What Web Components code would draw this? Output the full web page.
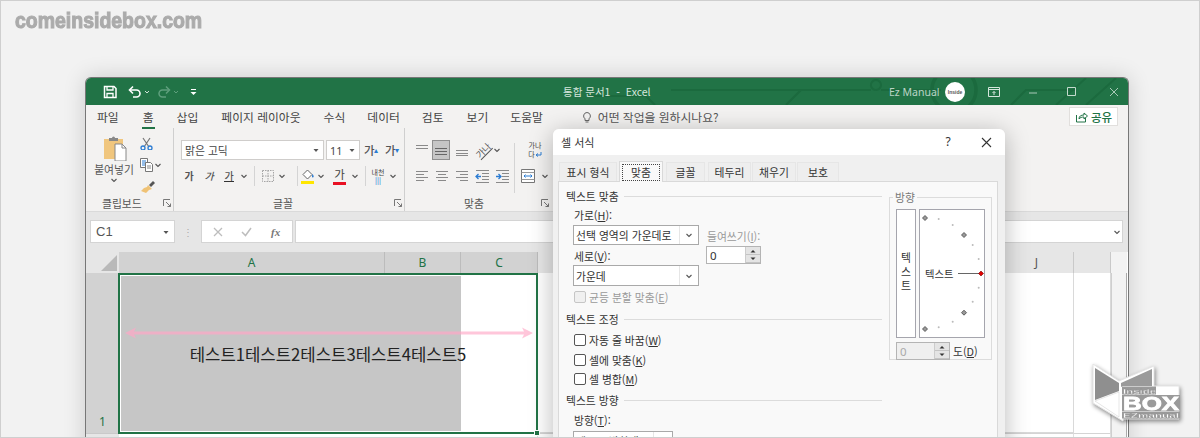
<!DOCTYPE html>
<html lang="ko">
<head>
<meta charset="utf-8">
<title>셀 서식</title>
<style>
  html, body { margin: 0; padding: 0; background: #f2f2f2; }
</style>
</head>
<body>
<x-page>
  <x-window>
    <x-titlebar></x-titlebar>
    <x-tabs></x-tabs>
    <x-ribbon></x-ribbon>
    <x-formula-bar></x-formula-bar>
    <x-sheet></x-sheet>
  </x-window>
  <x-format-dialog></x-format-dialog>
  <x-logo></x-logo>
</x-page>

<script>
const lines = (rows, color = '#8a8a8a') => rows.map(([x1, x2, y]) => `<path d="M${x1} ${y}H${x2}" stroke="${color}" fill="none"/>`).join('');

const ICONS = {
  save: '<path d="M1.5 1.5h9.5l2 2v9h-11.500z" fill="none" stroke="#fff" stroke-width="1.500"/><path d="M4 1.500v3.500h6v-3.500M4 12.500v-4h6v4" fill="none" stroke="#fff" stroke-width="1.300"/>',
  undo: '<path d="M2 5h6.500a3.300 3.300 0 0 1 0 7H5" fill="none" stroke="#fff" stroke-width="1.600"/><path d="M5 1.500 1.500 5 5 8.500" fill="none" stroke="#fff" stroke-width="1.600"/>',
  redo: '<path d="M12 5H5.500a3.300 3.300 0 0 0 0 7H9" fill="none" stroke="#5f9f7d" stroke-width="1.500"/><path d="M9 1.500 12.500 5 9 8.500" fill="none" stroke="#5f9f7d" stroke-width="1.500"/>',
  caretW: '<path d="M2 3 4 5 6 3" fill="none" stroke="#cfe3d8" stroke-width="1"/>',
  caretDim: '<path d="M2 3 4 5 6 3" fill="none" stroke="#5f9f7d" stroke-width="1"/>',
  custom: '<path d="M2 2.500h5" stroke="#fff"/><path d="M1.500 5h6L4.500 8z" fill="#fff"/>',
  caret: '<path d="M1.500 3 4 5.500 6.500 3" fill="none" stroke="#555" stroke-width="1.100"/>',
  tri: '<path d="M1.500 3h5L4 6z" fill="#555"/>',
  display: '<path d="M.5 1.500h11v9H.5z" fill="none" stroke="#d5e6dc"/><path d="M.5 3.500h11" stroke="#d5e6dc"/><path d="M6 9V5.500M4.500 7 6 5.500 7.500 7" fill="none" stroke="#d5e6dc"/>',
  min: '<path d="M1 6h8" stroke="#a9c9b7" stroke-width="1"/>',
  max: '<path d="M1.500 1.500h8v8h-8z" fill="none" stroke="#c4dacd"/>',
  close: '<path d="M1 1l8 8M9 1 1 9" stroke="#a9c9b7" fill="none"/>',
  bulb: '<path d="M6 1.500a3.500 3.500 0 0 0-2 6.300V9.500h4V7.800a3.500 3.500 0 0 0-2-6.300zM4.500 11h3" fill="none" stroke="#666"/>',
  share: '<path d="M1.500 5v7h9V8" fill="none" stroke="#217346"/><path d="M4 9c0-3 2-4 5-4V3l3.500 3L9 9V7C7 7 5 7.500 4 9z" fill="none" stroke="#217346"/>',
  paste: '<path d="M0 3h19v20H0z" fill="#f0c67e"/><path d="M5 2h3a1.500 1.500 0 0 1 3 0h3v3H5z" fill="#888"/><path d="M11 8h7l4 4v13H11z" fill="#fff" stroke="#888"/><path d="M18 8v4h4" fill="none" stroke="#888"/>',
  cut: '<path d="M3 1l6 9M10 1 4 10" stroke="#777" fill="none" stroke-width="1.200"/><circle cx="3" cy="11" r="2" fill="none" stroke="#2b7cd3" stroke-width="1.300"/><circle cx="10" cy="11" r="2" fill="none" stroke="#2b7cd3" stroke-width="1.300"/>',
  copy: '<path d="M.5.500h7v9h-7z" fill="#fff" stroke="#777"/><path d="M2 3h4M2 5h4M2 7h4" stroke="#2b7cd3"/><path d="M5.500 4.500h5l2 2v7h-7z" fill="#fff" stroke="#777"/><path d="M7 8h4M7 10h4" stroke="#888"/>',
  brush: '<path d="M9 6l4 4-3 1-3 3-5-2 3-3 3-1z" fill="#efc275" transform="translate(-1 -1)"/><path d="M9 5l4-4 2 2-4 4z" fill="#555"/>',
  borders: '<path d="M.5.500h11v11H.500zM6 .5v11M.5 6h11" fill="none" stroke="#a5a5a5" stroke-dasharray="1.500 1"/>',
  fill: '<path d="M6.500 1 11 5.500 6.500 10 2 5.500z" fill="#fff" stroke="#666"/><path d="M11.500 5c1.500 2 1.500 3 .500 3.500s-1.500-1-.5-3.500z" fill="#2b7cd3"/><path d="M0 12h13v3H0z" fill="#ffe600"/>',
  top: lines([[1, 13, 2.500], [1, 13, 5.500]]),
  mid: lines([[1, 13, 5.500], [1, 13, 8.500]], '#666') + '<path d="M1 11.500h12" stroke="#666"/>',
  bot: lines([[1, 13, 7.500], [1, 13, 10.500], [1, 13, 12.500]]),
  left: lines([[1, 13, 2.500], [1, 9, 5.500], [1, 13, 8.500], [1, 9, 11.500]]),
  center: lines([[1, 13, 2.500], [3, 11, 5.500], [1, 13, 8.500], [3, 11, 11.500]]),
  right: lines([[1, 13, 2.500], [5, 13, 5.500], [1, 13, 8.500], [5, 13, 11.500]]),
  dec: lines([[7, 14, 4.500], [7, 14, 7.500], [7, 14, 10.500], [1, 14, 1.500], [1, 14, 13.500]]) + '<path d="M6 7.500H1M3.500 5 1 7.500 3.500 10" fill="none" stroke="#2b7cd3" stroke-width="1.300"/>',
  inc: lines([[7, 14, 4.500], [7, 14, 7.500], [7, 14, 10.500], [1, 14, 1.500], [1, 14, 13.500]]) + '<path d="M1 7.500h5M3.500 5 6 7.500 3.500 10" fill="none" stroke="#2b7cd3" stroke-width="1.300"/>',
  merge: '<path d="M.5.500h13v13H.500z" fill="#fff" stroke="#777"/><path d="M.5 3.500h13M.5 10.500h13" stroke="#999"/><path d="M3 7h8M4.500 5.500 3 7l1.500 1.500M9.500 5.500 11 7 9.500 8.500" fill="none" stroke="#2b7cd3"/>',
  fxX: '<path d="M1 1l8 8M9 1 1 9" stroke="#bdbdbd" stroke-width="1.300" fill="none"/>',
  fxV: '<path d="M1 6l3.500 3.500L10 2" stroke="#bdbdbd" stroke-width="1.500" fill="none"/>',
  up: '<path d="M1.500 4.500 4 2l2.500 2.500z" fill="#333"/>',
  down: '<path d="M1.500 1.500 4 4l2.500-2.500z" fill="#333"/>',
  launch: '<path d="M.5 7V.5H7" fill="none" stroke="#777"/><path d="M3 3l4.500 4.500M4.500 7.500h3v-3" fill="none" stroke="#777"/>'
};

class XIcon extends HTMLElement {
  connectedCallback() {
    const w = +this.getAttribute('w') || 14;
    const h = +this.getAttribute('h') || w;
    const vb = this.getAttribute('vb') || `0 0 ${w} ${h}`;
    const name = this.getAttribute('name');
    this.attachShadow({ mode: 'open' }).innerHTML = `
      <style>:host { display: block; flex: none; width: ${w}px; height: ${h}px; } svg { display: block; }</style>
      <svg width="${w}" height="${h}" viewBox="${vb}">${ICONS[name] || ''}</svg>`;
  }
}
customElements.define('x-icon', XIcon);

const simple = (tag, html) => customElements.define(tag, class extends HTMLElement {
  connectedCallback() {
    this.attachShadow({ mode: 'open' }).innerHTML = html;
  }
});

simple('x-page', `
  <style>
    :host {
      display: block; position: relative; box-sizing: border-box;
      width: 1200px; height: 438px; overflow: hidden;
      border: 1px solid #cfcfcf; background: #f2f2f2;
      font-family: "Noto Sans CJK KR", "Noto Sans", sans-serif; color: #333;
    }
    .mark {
      margin: 6px 0 0 14px; height: 70px; white-space: nowrap;
      font: bold 22px/28px "Liberation Sans", sans-serif; color: #ababab;
      -webkit-text-stroke: 1.100px #ababab; transform: scaleX(.885); transform-origin: left top;
    }
  </style>
  <div class="mark">comeinsidebox.com</div>
  <slot></slot>`);

simple('x-window', `
  <style>
    :host {
      display: flex; flex-direction: column; box-sizing: border-box;
      width: 1044px; height: 400px; margin-left: 84px;
      border: 1px solid #777; border-bottom: 0; border-radius: 6px 6px 0 0;
      background: #fff; box-shadow: 0 0 22px rgba(0,0,0,.16); overflow: hidden;
    }
  </style>
  <slot></slot>`);

simple('x-titlebar', `
  <style>
    :host { display: flex; align-items: center; position: relative; flex: none; height: 27px; background: #217346; color: #d5e6dc; font-size: 10.500px; }
    .deco { position: absolute; left: 0; top: 0; }
    .row { display: flex; align-items: center; position: relative; width: 100%; }
    .title { margin-left: 365px; width: 326px; }
    .user { width: 56px; white-space: nowrap; font-family: "Noto Sans", sans-serif; font-size: 10.500px; color: #b9d3c5; }
    .avatar { width: 20px; height: 20px; border-radius: 50%; background: #fff; color: #555; font: bold 5px/20px "Liberation Sans", sans-serif; text-align: center; white-space: nowrap; overflow: hidden; }
  </style>
  <svg class="deco" width="1042" height="27" fill="none" stroke="#1b6a3e" stroke-width="2">
    <path d="M500 18h60l9 9M585 12h200M700 27l15-15M790 12a5 5 0 1 0-.1 0M795 12h60"/>
    <circle cx="868" cy="12" r="22" stroke-width="3.500"/>
    <path d="M925 27l15-15h50M970 27 1000 0M1000 27 1030 0"/>
  </svg>
  <div class="row">
    <x-icon name="save" style="margin-left:17px"></x-icon>
    <x-icon name="undo" style="margin-left:11px"></x-icon>
    <x-icon name="caretW" w="8" style="margin-left:1px"></x-icon>
    <x-icon name="redo" style="margin-left:6px"></x-icon>
    <x-icon name="caretDim" w="8" style="margin-left:1px"></x-icon>
    <x-icon name="custom" w="9" style="margin-left:9px"></x-icon>
    <span class="title">통합 문서1&nbsp; -&nbsp; Excel</span>
    <span class="user">Ez Manual</span>
    <div class="avatar">Inside</div>
    <x-icon name="display" w="12" style="margin-left:23px"></x-icon>
    <x-icon name="min" w="10" style="margin-left:28px"></x-icon>
    <x-icon name="max" w="11" style="margin-left:28px"></x-icon>
    <x-icon name="close" w="10" style="margin-left:32px"></x-icon>
  </div>`);

simple('x-tabs', `
  <style>
    :host { display: flex; align-items: center; flex: none; height: 23px; background: #f3f2f1; font-size: 11.800px; color: #444; position: relative; }
    span { position: relative; white-space: nowrap; }
    .on::after { content: ""; position: absolute; left: -1px; right: -1px; bottom: -4px; height: 2px; background: #217346; }
    .share { margin-left: auto; margin-right: 10px; width: 49px; height: 19px; box-sizing: border-box; background: #fff; border: 1px solid #e1dfdd; display: flex; align-items: center; justify-content: center; gap: 3px; color: #217346; font-weight: 500; font-size: 11.500px; }
  </style>
  <span style="margin-left:11px">파일</span>
  <span class="on" style="margin-left:24px">홈</span>
  <span style="margin-left:23px">삽입</span>
  <span style="margin-left:23px">페이지 레이아웃</span>
  <span style="margin-left:23px">수식</span>
  <span style="margin-left:22px">데이터</span>
  <span style="margin-left:22px">검토</span>
  <span style="margin-left:23px">보기</span>
  <span style="margin-left:22px">도움말</span>
  <x-icon name="bulb" w="12" style="margin-left:38px"></x-icon>
  <span style="margin-left:5px;color:#555">어떤 작업을 원하시나요?</span>
  <div class="share"><x-icon name="share" w="13"></x-icon><span>공유</span></div>`);

simple('x-ribbon-group', `
  <style>
    :host { display: flex; flex-direction: column; flex: none; box-sizing: border-box; height: 84px; border-right: 1px solid #cfcfcf; margin: 0; }
    .body { flex: 1; padding-top: 7px; display: block; }
    .foot { display: flex; align-items: center; height: 14px; margin-bottom: 2px; font-size: 10.800px; color: #555; padding-right: 2px; }
    .foot span { margin-left: var(--lx, 0); }
    .foot x-icon { margin-left: auto; }
  </style>
  <div class="body"><slot></slot></div>
  <div class="foot"><span><slot name="label"></slot></span><x-icon name="launch" w="8"></x-icon></div>`);

simple('x-ribbon', `
  <style>
    :host { display: flex; flex: none; height: 84px; box-sizing: border-box; background: #f3f2f1; border-bottom: 1px solid #dadada; overflow: hidden; }
    .clip { display: grid; grid-template-columns: 40px 34px; padding-left: 8px; height: 60px; }
    .paste { text-align: center; font-size: 10.800px; color: #555; line-height: 14px; white-space: nowrap; }
    .paste x-icon { margin: 1px 0 1px 10px; }
    .paste x-icon.cr { margin: 0 auto; }
    .small { display: flex; flex-direction: column; gap: 8px; padding: 2px 0 0 6px; }
    .small div { display: flex; align-items: center; gap: 1px; }
    .row { display: flex; align-items: center; }
    .combo { box-sizing: border-box; height: 20px; background: #fff; border: 1px solid #cfcdcb; display: flex; align-items: center; padding: 0 3px 0 3px; font-size: 10.800px; color: #444; justify-content: space-between; white-space: nowrap; }
    .sep { width: 1px; height: 20px; background: #d4d4d4; flex: none; }
    .sel { box-sizing: border-box; width: 18px; height: 20px; background: #c6c6c6; border: 1px solid #8f8f8f; display: flex; align-items: center; justify-content: center; }
    .ga { display: flex; position: relative; width: 14px; font-size: 11.500px; font-weight: 500; color: #555; line-height: 14px; }
    .slot { display: flex; align-items: center; justify-content: center; flex: none; height: 20px; }
    .u { border-bottom: 1px solid #333; line-height: 11px; }
    .col { position: relative; width: 13px; height: 17px; font-size: 11.500px; line-height: 13px; text-align: center; color: #444; border-bottom: 3px solid #e81123; box-sizing: border-box; }
    .cw { width: 14px; font-size: 7px; line-height: 8px; text-align: center; color: #444; }
    .cw b { color: #2b7cd3; font-weight: 500; display: block; }
    .align { display: flex; }
    .alignL { width: 101px; padding-left: 8px; display: flex; flex-direction: column; gap: 6px; }
    .alignR { padding-left: 6px; display: flex; flex-direction: column; gap: 6px; }
    .vsep { width: 1px; height: 50px; background: #d4d4d4; margin-top: 3px; }
    .up { margin: 0 0 0 -1px; color: #2b7cd3; font-size: 8px; }
    .orient { font-size: 9px; transform: rotate(-45deg); color: #555; text-decoration: underline; white-space: nowrap; }
    .wrapt { font-size: 7px; line-height: 9px; color: #444; width: 16px; text-align: center; }
    .wrapt svg { vertical-align: -1px; }
  </style>
  <x-ribbon-group style="width:88px;--lx:16px">
    <div class="clip">
      <div class="paste">
        <x-icon name="paste" w="23" h="25"></x-icon>
        <div>붙여넣기</div>
        <x-icon class="cr" name="caret" w="8"></x-icon>
      </div>
      <div class="small">
        <x-icon name="cut" w="13"></x-icon>
        <div><x-icon name="copy" w="13" h="14"></x-icon><x-icon name="caret" w="8"></x-icon></div>
        <x-icon name="brush" w="15"></x-icon>
      </div>
    </div>
    <span slot="label">클립보드</span>
  </x-ribbon-group>

  <x-ribbon-group style="width:231px;--lx:99px">
    <div class="row" style="padding-left:7px;margin-top:5px">
      <div class="combo" style="width:143px"><span>맑은 고딕</span><x-icon name="tri" w="8"></x-icon></div>
      <div class="combo" style="width:34px;margin-left:2px;font-family:'Noto Sans',sans-serif"><span>11</span><x-icon name="tri" w="8"></x-icon></div>
      <div class="slot" style="width:14px;margin-left:4px"><span class="ga">가<span class="up">▴</span></span></div>
      <div class="slot" style="width:14px;margin-left:7px"><span class="ga">가<span class="up">▾</span></span></div>
    </div>
    <div class="row" style="padding-left:5px;margin-top:6px">
      <div class="slot" style="width:20px"><b class="ga" style="font-size:10px;font-weight:700;width:auto">가</b></div>
      <div class="slot" style="width:20px"><i class="ga" style="font-size:10px;width:auto">가</i></div>
      <div class="slot" style="width:20px"><span class="ga u" style="font-size:10px;width:auto">가</span></div>
      <x-icon name="caret" w="8" style="margin-left:1px"></x-icon>
      <div class="sep" style="margin-left:6px"></div>
      <x-icon name="borders" w="12" style="margin-left:7px"></x-icon>
      <x-icon name="caret" w="8" style="margin-left:4px"></x-icon>
      <div class="sep" style="margin-left:11px"></div>
      <x-icon name="fill" w="13" h="15" style="margin-left:3px"></x-icon>
      <x-icon name="caret" w="8" style="margin-left:3px"></x-icon>
      <div class="col" style="margin-left:8px">가</div>
      <x-icon name="caret" w="8" style="margin-left:5px"></x-icon>
      <div class="sep" style="margin-left:6px"></div>
      <div class="cw" style="margin-left:5px">내천<b>|||</b></div>
      <x-icon name="caret" w="8" style="margin-left:4px"></x-icon>
    </div>
    <span slot="label">글꼴</span>
  </x-ribbon-group>

  <x-ribbon-group style="width:146px;--lx:59px;border-right:0">
    <div class="align" style="margin-top:5px">
      <div class="alignL">
        <div class="row">
          <div class="slot" style="width:14px;margin-left:2px"><x-icon name="top"></x-icon></div>
          <div class="sel" style="margin-left:3px"><x-icon name="mid"></x-icon></div>
          <div class="slot" style="width:14px;margin-left:5px"><x-icon name="bot"></x-icon></div>
          <div class="slot" style="width:16px;margin-left:6px"><span class="orient">가나</span></div>
          <x-icon name="caret" w="8" style="margin-left:2px"></x-icon>
        </div>
        <div class="row">
          <div class="slot" style="width:14px;margin-left:2px"><x-icon name="left"></x-icon></div>
          <div class="slot" style="width:14px;margin-left:6px"><x-icon name="center"></x-icon></div>
          <div class="slot" style="width:14px;margin-left:6px"><x-icon name="right"></x-icon></div>
          <div class="slot" style="width:15px;margin-left:6px"><x-icon name="dec" w="15"></x-icon></div>
          <div class="slot" style="width:15px;margin-left:5px"><x-icon name="inc" w="15"></x-icon></div>
        </div>
      </div>
      <div class="vsep" style="margin-left:0"></div>
      <div class="alignR">
        <div class="slot"><div class="wrapt">가나<br>다<svg width="7" height="7"><path d="M6 1v3H1.500M3 2.500 1 4l2 1.500" fill="none" stroke="#2b7cd3"/></svg></div></div>
        <div class="row" style="height:20px"><x-icon name="merge"></x-icon><x-icon name="caret" w="8" style="margin-left:6px"></x-icon></div>
      </div>
    </div>
    <span slot="label">맞춤</span>
  </x-ribbon-group>`);

simple('x-formula-bar', `
  <style>
    :host { display: flex; flex: none; box-sizing: border-box; height: 40px; padding: 8px 5px 9px 4px; background: #e6e6e6; align-items: stretch; }
    .box { background: #fff; border: 1px solid #d4d4d4; box-sizing: border-box; display: flex; align-items: center; }
    .name { width: 85px; padding: 0 4px 0 5px; justify-content: space-between; font: 13px "Liberation Sans", sans-serif; color: #555; }
    .dots { width: 26px; display: flex; align-items: center; justify-content: center; color: #aaa; font-size: 10px; letter-spacing: 0; }
    .btns { width: 92px; }
    .fx { font: italic bold 11px "Liberation Serif", serif; color: #777; margin-left: 19px; }
    .input { flex: 1; margin-left: 2px; justify-content: flex-end; padding-right: 1px; }
  </style>
  <div class="box name"><span>C1</span><x-icon name="tri" w="8"></x-icon></div>
  <div class="dots">⋮</div>
  <div class="box btns">
    <x-icon name="fxX" w="10" style="margin-left:11px"></x-icon>
    <x-icon name="fxV" w="11" style="margin-left:18px"></x-icon>
    <span class="fx">fx</span>
  </div>
  <div class="box input"><x-icon name="caret" w="8"></x-icon></div>`);

simple('x-sheet', `
  <style>
    :host {
      display: grid; flex: 1; min-height: 0;
      grid-template-columns: 33px 266px 76px 77px 462px 74px 37px 16px;
      grid-template-rows: 21px 160px 1fr;
      background: #fff; font-family: "Noto Sans", "Noto Sans CJK KR", sans-serif;
    }
    .h { background: #e6e6e6; display: flex; align-items: center; justify-content: center; font-size: 12px; color: #555; border-right: 1px solid #c9c9c9; }
    .s { background: #d2d2d2; color: #217346; border-right: 1px solid #bcbcbc; }
    .corner { background: #e6e6e6; display: flex; align-items: flex-end; justify-content: flex-end; padding: 0 2px 2px 0; }
    .rh { background: #d2d2d2; color: #217346; align-items: flex-end; padding-bottom: 3px; box-sizing: border-box; font-size: 12px; display: flex; justify-content: center; }
    .rh2 { background: #e6e6e6; border-top: 1px solid #c9c9c9; }
    .cell {
      grid-column: span 3; position: relative; box-sizing: border-box;
      border: 2px solid #217346; margin: 0 0 -1px -1px;
      outline: 1px solid #fff; outline-offset: -3px;
      background: linear-gradient(to right, #c6c6c6 341px, #fff 341px);
      display: flex; align-items: center; justify-content: center;
      font: 16.700px "Noto Sans CJK KR", sans-serif; color: #222;
    }
    .handle { position: absolute; right: -4px; bottom: -4px; background: #217346; border: 1px solid #fff; box-sizing: content-box; width: 4px; height: 4px; }
    .arrow { position: absolute; left: 5px; top: 52px; }
    .g { border-right: 1px solid #d9d9d9; border-bottom: 1px solid #d9d9d9; }
    .bar { background: #f3f3f3; border-left: 1px solid #cfcfcf; border-right: 1px solid #aaa; }
    .b { border-top: 1px solid #d4d4d4; border-right: 1px solid #e0e0e0; }
  </style>
  <div class="corner"><svg width="16" height="16"><path d="M16 0V16H0z" fill="#b9b9b9"/></svg></div>
  <div class="h s">A</div><div class="h s">B</div><div class="h s">C</div>
  <div class="h"></div><div class="h">J</div><div class="h"></div><div class="h" style="border:0;background:#f3f3f3"></div>
  <div class="rh">1</div>
  <div class="cell">
    <svg class="arrow" width="408" height="12">
      <path d="M0 6 11 .5 9 4.500H336v3H9l2 4z" fill="#eeb0c6"/>
      <path d="M336 4.500h63l-2-4L408 6l-11 5.500 2-4H336z" fill="#ffc6da"/>
    </svg>
    <span>테스트1테스트2테스트3테스트4테스트5</span>
    <div class="handle"></div>
  </div>
  <div class="g"></div><div class="g"></div><div class="g" style="border-bottom:0"></div><div class="bar"></div>
  <div class="rh2"></div>
  <div class="b" style="grid-column:span 3"></div><div class="b"></div><div class="b"></div><div class="b"></div><div class="bar"></div>`);

simple('x-section', `
  <style>
    :host { display: flex; align-items: center; gap: 5px; height: 14px; font-size: 10.800px; line-height: 14px; color: #333; white-space: nowrap; }
    i { flex: 1; height: 1px; background: #dcdcdc; }
  </style><slot></slot><i></i>`);

simple('x-check', `
  <style>
    :host { display: flex; align-items: center; gap: 3px; height: 14px; font-size: 10.800px; line-height: 14px; color: #333; white-space: nowrap; }
    :host([disabled]) { color: #9a9a9a; }
    i { width: 10px; height: 10px; border: 1px solid #555; border-radius: 2px; background: #fff; flex: none; }
    :host([disabled]) i { border-color: #c6c6c6; background: #f0f0f0; }
  </style><i></i><span><slot></slot></span>`);

simple('x-select', `
  <style>
    :host { display: flex; box-sizing: border-box; height: 20px; background: #fff; border: 1px solid #a9a9a9; align-items: center; font-size: 10.800px; color: #333; white-space: nowrap; overflow: hidden; }
    span { flex: 1; padding-left: 2px; }
    .b { width: 18px; height: 100%; display: flex; align-items: center; justify-content: center; border-left: 1px solid #e6e6e6; }
  </style>
  <span><slot></slot></span><div class="b"><x-icon name="caret" w="8"></x-icon></div>`);

simple('x-spin', `
  <style>
    :host { display: flex; box-sizing: border-box; height: 18px; background: #fff; border: 1px solid #b4b4b4; font: 11.500px "Noto Sans", sans-serif; color: #333; align-items: center; overflow: hidden; }
    :host([disabled]) { background: #efefef; color: #aaa; }
    span { flex: 1; padding-left: 3px; }
    .b { width: 14px; height: 100%; display: flex; flex-direction: column; background: #e4e4e4; border-left: 1px solid #ccc; }
    .b div { flex: 1; display: flex; align-items: center; justify-content: center; border-bottom: 1px solid #c4c4c4; }
  </style>
  <span><slot></slot></span>
  <div class="b"><div><x-icon name="up" w="8" h="6"></x-icon></div><div><x-icon name="down" w="8" h="6"></x-icon></div></div>`);

simple('x-format-dialog', `
  <style>
    :host {
      position: absolute; left: 552px; top: 128px; width: 452px; height: 330px;
      display: flex; flex-direction: column; background: #f0f0f0;
      border-radius: 6px 6px 0 0; box-shadow: 0 4px 24px rgba(0,0,0,.28);
      font-size: 10.800px; color: #333; line-height: 14px;
    }
    .title { display: flex; align-items: center; flex: none; height: 26px; padding-left: 8px; background: #fff; border-radius: 6px 6px 0 0; font-size: 11px; }
    .tabs { display: flex; align-items: flex-end; flex: none; height: 26px; padding-left: 6px; }
    .tab { box-sizing: border-box; height: 19px; text-align: center; background: #eeeeee; border: 1px solid #e6e6e6; border-bottom: 0; line-height: 18px; white-space: nowrap; }
    .tab.on { height: 21px; background: #f9f9f9; border-color: #d9d9d9; margin: 0 2px; padding: 2px; position: relative; z-index: 1; margin-bottom: -1px; }
    .tab.on div { border: 1px dotted #444; height: 15px; line-height: 14px; }
    .panel { flex: 1; margin: 0 7px 0 5px; border: 1px solid #d9d9d9; background: #f9f9f9; display: flex; padding: 7px 0 0 7px; }
    .left { width: 316px; flex: none; }
    .f { padding-left: 8px; }
    .dis { color: #999; }
    .hv { display: grid; grid-template-columns: 126px 55px; column-gap: 7px; margin-left: -1px; }
    .lb { padding-left: 1px; }
    u { text-underline-offset: 1px; }
    fieldset { box-sizing: border-box; width: 103px; height: 170px; margin: 1px 0 0 7px; padding: 0 6px; border: 1px solid #dcdcdc; min-width: 0; }
    legend { padding: 0 2px; color: #777; margin-left: -3px; font-size: 10.800px; }
    .dial { display: flex; gap: 3px; margin-top: 5px; }
    .vt { box-sizing: border-box; width: 20px; height: 129px; border: 1px solid #a5a5ad; background: #fff; display: flex; flex-direction: column; align-items: center; justify-content: center; line-height: 14px; padding-bottom: 6px; }
    .dw { box-sizing: border-box; width: 66px; height: 129px; border: 1px solid #a5a5ad; background: #fff; }
    .dw svg { display: block; margin: -1px; }
    .deg { display: flex; align-items: center; gap: 3px; margin-top: 4px; white-space: nowrap; }
  </style>
  <div class="title"><span>셀 서식</span>
    <span style="margin-left:351px;font-family:'Noto Sans',sans-serif;font-size:12px">?</span>
    <svg style="margin-left:30px" width="11" height="11"><path d="M1 1l9 9M10 1 1 10" stroke="#333" fill="none" stroke-width="1.100"/></svg>
  </div>
  <div class="tabs">
    <div class="tab" style="width:58px">표시 형식</div>
    <div class="tab on" style="width:44px"><div>맞춤</div></div>
    <div class="tab" style="width:39px;margin-left:1px">글꼴</div>
    <div class="tab" style="width:43px;margin-left:3px">테두리</div>
    <div class="tab" style="width:44px;margin-left:1px">채우기</div>
    <div class="tab" style="width:42px;margin-left:1px">보호</div>
  </div>
  <div class="panel">
    <div class="left">
      <x-section>텍스트 맞춤</x-section>
      <div class="f" style="margin-top:5px">
        <div class="hv">
          <div>
            <div class="lb">가로(<u>H</u>):</div>
            <x-select style="margin-top:3px">선택 영역의 가운데로</x-select>
            <div class="lb" style="margin-top:4px">세로(<u>V</u>):</div>
            <x-select style="margin-top:2px;height:21px">가운데</x-select>
          </div>
          <div style="margin-top:21px">
            <div class="dis lb" style="white-space:nowrap">들여쓰기(<u>I</u>):</div>
            <x-spin style="margin-top:3px">0</x-spin>
          </div>
        </div>
        <x-check disabled style="margin-top:4px">균등 분할 맞춤(<u>E</u>)</x-check>
      </div>
      <x-section style="margin-top:8px">텍스트 조정</x-section>
      <div class="f">
        <x-check style="margin-top:7px">자동 줄 바꿈(<u>W</u>)</x-check>
        <x-check style="margin-top:6px">셀에 맞춤(<u>K</u>)</x-check>
        <x-check style="margin-top:5px">셀 병합(<u>M</u>)</x-check>
      </div>
      <x-section style="margin-top:7px">텍스트 방향</x-section>
      <div class="f" style="margin-top:6px">
        <div>방향(<u>T</u>):</div>
        <x-select style="margin:4px 0 0 -1px;width:100px">텍스트 방향대로</x-select>
      </div>
    </div>
    <fieldset>
      <legend>방향</legend>
      <div class="dial">
        <div class="vt"><span>텍</span><span>스</span><span>트</span></div>
        <div class="dw">
          <svg width="66" height="129" viewBox="919 209 66 129">
            <g fill="#bbb">
              <circle cx="938.700" cy="219" r="1"/><circle cx="952.700" cy="225" r="1"/><circle cx="972.700" cy="245" r="1"/><circle cx="978.700" cy="259" r="1"/>
              <circle cx="978.700" cy="287.700" r="1"/><circle cx="972.700" cy="301.700" r="1"/><circle cx="952.700" cy="321.700" r="1"/><circle cx="938.700" cy="327.300" r="1"/>
            </g>
            <g fill="#999" stroke="#444" stroke-width=".8">
              <path d="M925 215.500l2.500 2.500-2.500 2.500-2.500-2.500z"/><path d="M964 232.500l2.500 2.500-2.500 2.500-2.500-2.500z"/>
              <path d="M964 310.200l2.500 2.500-2.500 2.500-2.500-2.500z"/><path d="M925 326.500l2.500 2.500-2.500 2.500-2.500-2.500z"/>
            </g>
            <path d="M958 273.500h21" stroke="#666"/>
            <path d="M981 271l2.500 2.500-2.500 2.500-2.500-2.500z" fill="#e00000" stroke="#700" stroke-width=".6"/>
            <text x="925" y="277.500" font-size="10.300" fill="#333">텍스트</text>
          </svg>
        </div>
      </div>
      <div class="deg"><x-spin disabled style="width:54px">0</x-spin><span>도(<u>D</u>)</span></div>
    </fieldset>
  </div>`);

simple('x-logo', `
  <style>
    :host { position: absolute; left: 1088px; top: 360px; width: 96px; height: 64px; filter: drop-shadow(1px 2px 2px rgba(0,0,0,.45)); }
    svg { display: block; }
    text { font-family: "Liberation Sans", sans-serif; font-weight: bold; fill: #fff; stroke: #8c8c8c; stroke-width: .3; }
  </style>
  <svg width="96" height="64" viewBox="1088 360 96 64">
    <path d="M1092 363l26 17 35-15v20h25v33h-56v2l-30-18z" fill="#fff" stroke="#e4e4e4"/>
    <path d="M1094 367l24 15v8l-24 9z" fill="#8f8f8f"/>
    <path d="M1120 382l31-14v17h-29l-2 1z" fill="#9a9a9a"/>
    <path d="M1094 400l24-9v25z" fill="#fff" stroke="#ccc" stroke-width=".5"/>
    <path d="M1121 385.500h34v8h-34zM1121 394h58v16h-58zM1121 410.500h58v7h-58z" fill="#9a9a9a"/>
    <text x="1122" y="392.500" font-size="7" textLength="33" lengthAdjust="spacingAndGlyphs">Inside</text>
    <text x="1122" y="409" font-size="18" textLength="56" lengthAdjust="spacingAndGlyphs" style="stroke-width:.8;stroke:#fff">BOX</text>
    <text x="1122" y="417" font-size="7" textLength="56" lengthAdjust="spacingAndGlyphs">EZmanual</text>
  </svg>`);
</script>
</body>
</html>
